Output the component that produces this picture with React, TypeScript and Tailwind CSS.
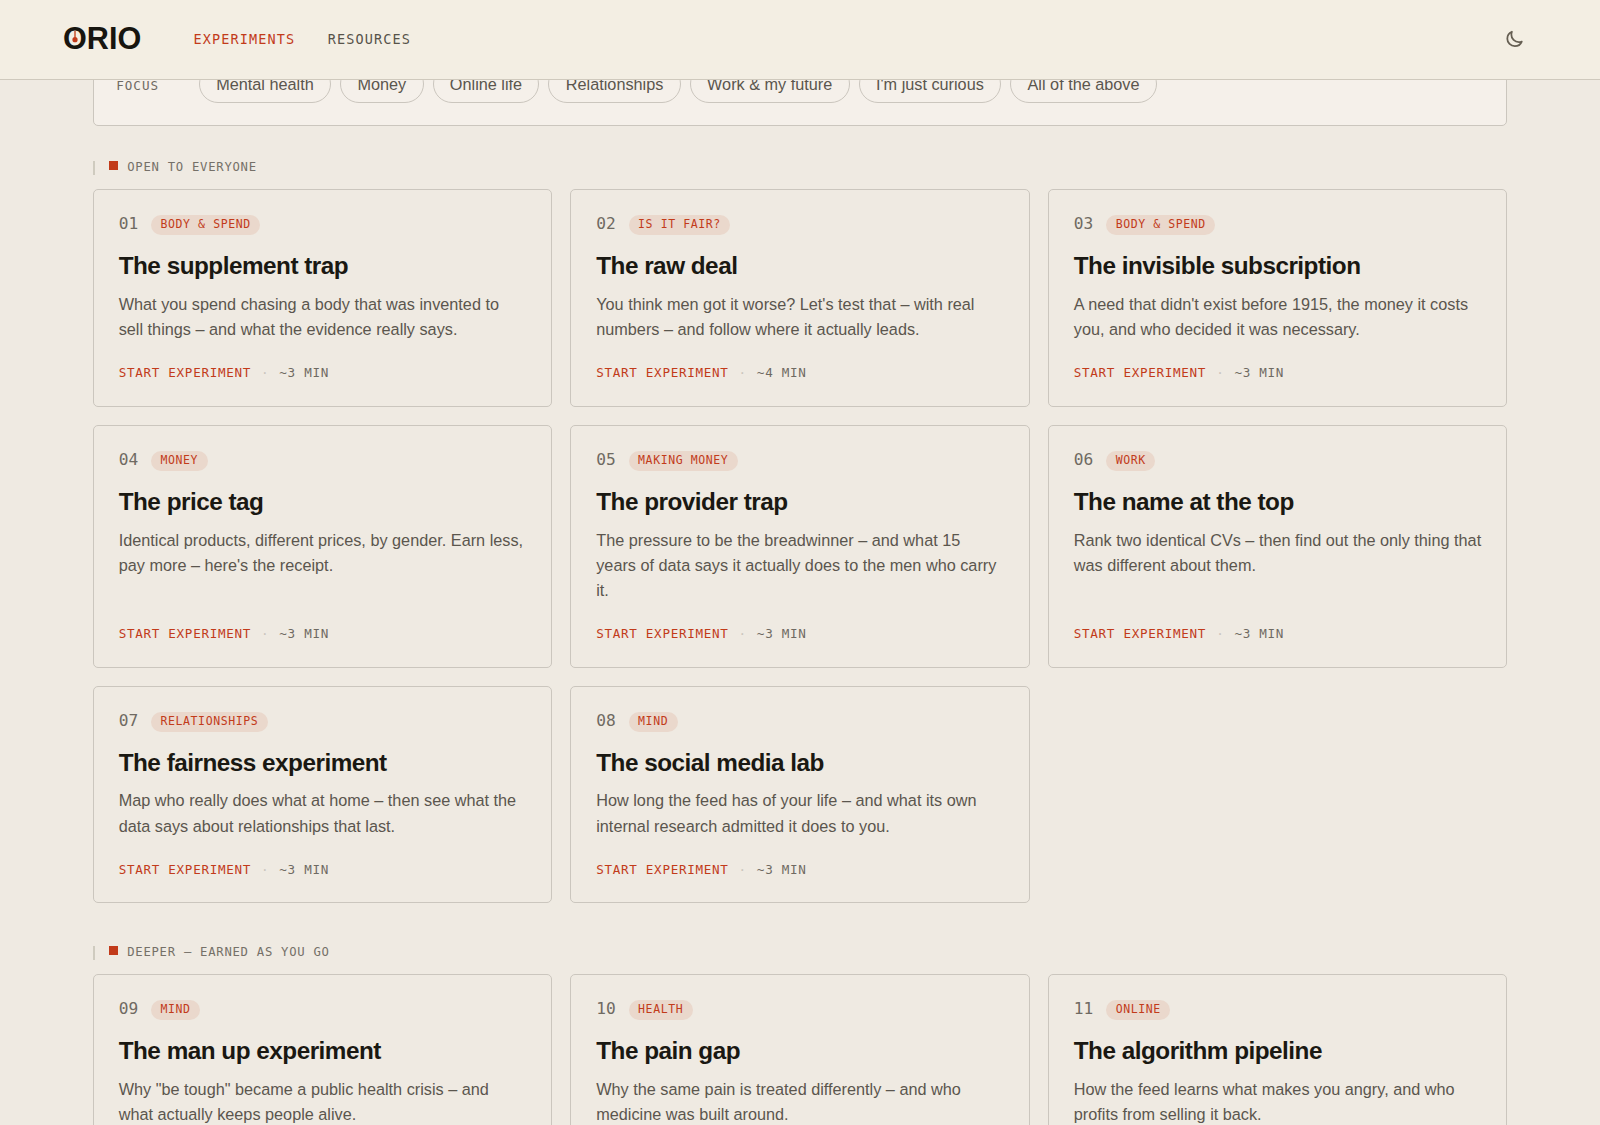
interface Experiment {
  no: string;
  tag: string;
  title: string;
  text: string;
  minutes: number;
}

const focusOptions = [
  'Mental health',
  'Money',
  'Online life',
  'Relationships',
  'Work & my future',
  "I'm just curious",
  'All of the above',
];

const openExperiments: Experiment[] = [
  { no: '01', tag: 'Body & spend', title: 'The supplement trap', text: 'What you spend chasing a body that was invented to sell things – and what the evidence really says.', minutes: 3 },
  { no: '02', tag: 'Is it fair?', title: 'The raw deal', text: "You think men got it worse? Let's test that – with real numbers – and follow where it actually leads.", minutes: 4 },
  { no: '03', tag: 'Body & spend', title: 'The invisible subscription', text: "A need that didn't exist before 1915, the money it costs you, and who decided it was necessary.", minutes: 3 },
  { no: '04', tag: 'Money', title: 'The price tag', text: "Identical products, different prices, by gender. Earn less, pay more – here's the receipt.", minutes: 3 },
  { no: '05', tag: 'Making money', title: 'The provider trap', text: 'The pressure to be the breadwinner – and what 15 years of data says it actually does to the men who carry it.', minutes: 3 },
  { no: '06', tag: 'Work', title: 'The name at the top', text: 'Rank two identical CVs – then find out the only thing that was different about them.', minutes: 3 },
  { no: '07', tag: 'Relationships', title: 'The fairness experiment', text: 'Map who really does what at home – then see what the data says about relationships that last.', minutes: 3 },
  { no: '08', tag: 'Mind', title: 'The social media lab', text: 'How long the feed has of your life – and what its own internal research admitted it does to you.', minutes: 3 },
];

const deeperExperiments: Experiment[] = [
  { no: '09', tag: 'Mind', title: 'The man up experiment', text: 'Why "be tough" became a public health crisis – and what actually keeps people alive.', minutes: 3 },
  { no: '10', tag: 'Health', title: 'The pain gap', text: 'Why the same pain is treated differently – and who medicine was built around.', minutes: 3 },
  { no: '11', tag: 'Online', title: 'The algorithm pipeline', text: 'How the feed learns what makes you angry, and who profits from selling it back.', minutes: 3 },
];

const Logo = () => (
  <a href="#" className="relative mb-[2px] block text-[30.6px] leading-none font-bold text-[#17150f]">
    ORIO
    <svg className="absolute left-[8px] top-[7px]" width="8" height="16" viewBox="0 0 8 16" fill="none">
      <path d="M4 0.8v7" stroke="#cf6a4a" strokeWidth="1.8" />
      <circle cx="4" cy="9.7" r="2.6" fill="#c23b1a" />
    </svg>
  </a>
);

const Header = () => (
  <header className="relative z-10 flex h-20 shrink-0 items-center border-b border-[#cfc9bd] bg-[#f3eee3] pl-[63px] pr-[77px]">
    <Logo />
    <nav className="ml-[52.4px] flex gap-[32.4px] font-['DejaVu_Sans_Mono',monospace] text-[13.5px] tracking-[1.12px] uppercase">
      <a href="#" className="text-[#c23b1a]">Experiments</a>
      <a href="#" className="text-[#57534a]">Resources</a>
    </nav>
    <button className="ml-auto text-[#655e52]" aria-label="Toggle theme">
      <svg width="18.5" height="18.5" viewBox="0 0 24 24" fill="none" stroke="currentColor" strokeWidth="2.3" strokeLinecap="round" strokeLinejoin="round">
        <path d="M21.752 15.002A9.72 9.72 0 0 1 18 15.75c-5.385 0-9.75-4.365-9.75-9.75 0-1.33.266-2.597.748-3.752A9.753 9.753 0 0 0 3 11.25C3 16.635 7.365 21 12.75 21a9.753 9.753 0 0 0 9.002-5.998Z" />
      </svg>
    </button>
  </header>
);

const SectionLabel = ({ children }: { children: string }) => (
  <div className="flex h-3.5 items-start border-l-2 border-[#cfcbbf] pl-[14px]">
    <span className="size-[9px] bg-[#c23b1a]" />
    <h2 className="ml-[9.5px] font-['DejaVu_Sans_Mono',monospace] text-[12.24px] leading-[12px] tracking-[0.06em] text-[#757068] uppercase">
      {children}
    </h2>
  </div>
);

const Card = ({ item }: { item: Experiment }) => (
  <article className="flex flex-col rounded-[5px] border border-[#cbc6be] px-[25px] pt-[25.2px] pb-[22.7px]">
    <div className="flex h-5 items-start gap-[13px] font-['DejaVu_Sans_Mono',monospace]">
      <span className="text-[16.2px] leading-[18px] text-[#6f6a62]">{item.no}</span>
      <span className="h-5 rounded-full bg-[#ead8cc] px-[9.4px] text-[11.52px] leading-[18px] tracking-[0.05em] text-[#c23b1a] uppercase">
        {item.tag}
      </span>
    </div>
    <h3 className="mt-4 text-[24.3px] leading-[30px] font-bold tracking-[-0.5px] text-[#1a1812]">{item.title}</h3>
    <p className="mt-[10.6px] mb-[20.7px] text-[16.25px] leading-[25.2px] text-[#5b564e]">{item.text}</p>
    <div className="mt-auto flex gap-[10px] font-['DejaVu_Sans_Mono',monospace] text-[12.6px] leading-5 tracking-[0.69px] uppercase">
      <span className="text-[#c23b1a]">Start experiment</span>
      <span className="text-[#cbc6be]">·</span>
      <span className="text-[#6f6a62]">~{item.minutes} min</span>
    </div>
  </article>
);

const CardGrid = ({ items }: { items: Experiment[] }) => (
  <div className="mt-[14.3px] grid grid-cols-3 gap-[18px]">
    {items.map((item) => (
      <Card key={item.no} item={item} />
    ))}
  </div>
);

const App = () => {
  return (
    <div className="flex h-[1125px] flex-col overflow-hidden bg-[#efeae2] font-['Liberation_Sans',Arial,sans-serif]">
      <Header />
      <main className="-mt-[34px] px-[92.7px]">
        <div className="flex h-20 items-end rounded-[5px] border border-[#cbc6be] bg-[#f5f0ea] px-[22.5px] pb-[21.6px]">
          <span className="w-[82.6px] font-['DejaVu_Sans_Mono',monospace] text-[12.6px] leading-[35px] tracking-[0.08em] text-[#6f6a62] uppercase">
            Focus
          </span>
          <div className="flex gap-[9px]">
            {focusOptions.map((option) => (
              <button key={option} className="rounded-full border border-[#cbc6be] px-[16.35px] py-[5px] text-[16.25px] leading-[26px] text-[#5b564e]">
                {option}
              </button>
            ))}
          </div>
        </div>
        <section className="mt-[35px]">
          <SectionLabel>Open to everyone</SectionLabel>
          <CardGrid items={openExperiments} />
        </section>
        <section className="mt-[42.4px]">
          <SectionLabel>Deeper – earned as you go</SectionLabel>
          <CardGrid items={deeperExperiments} />
        </section>
      </main>
    </div>
  );
};

export default App;
